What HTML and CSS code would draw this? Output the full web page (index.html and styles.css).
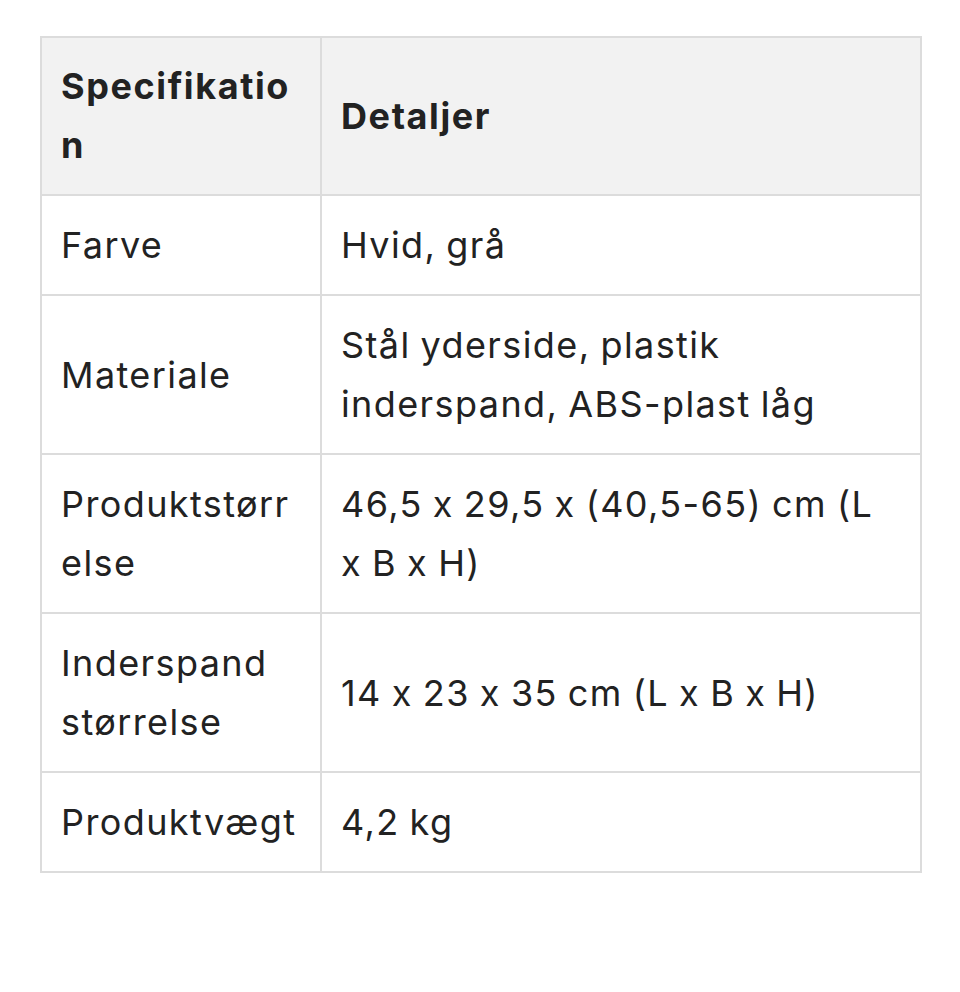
FILE: index.html
```html
<!DOCTYPE html>
<html lang="da">
<head>
<meta charset="utf-8">
<link rel="stylesheet" href="styles.css">
</head>
<body>
<div class="wrap">
<table class="spec">
<colgroup><col class="c1"><col class="c2"></colgroup>
<thead>
<tr><th>Specifikation</th><th>Detaljer</th></tr>
</thead>
<tbody>
<tr><td>Farve</td><td>Hvid, grå</td></tr>
<tr><td>Materiale</td><td>Stål yderside, plastik inderspand, ABS-plast låg</td></tr>
<tr><td>Produktstørrelse</td><td>46,5 x 29,5 x (40,5-65) cm (L x B x H)</td></tr>
<tr><td>Inderspand størrelse</td><td>14 x 23 x 35 cm (L x B x H)</td></tr>
<tr><td>Produktvægt</td><td>4,2 kg</td></tr>
</tbody>
</table>
</div>
</body>
</html>
```
FILE: styles.css
```css
html, body { margin: 0; padding: 0; background: #fff; }
.wrap { padding: 36px 40px; }
.spec {
  width: 880px;
  border-collapse: collapse;
  table-layout: fixed;
  font-family: Inter, "DejaVu Sans", sans-serif;
  font-feature-settings: "calt" 0;
  font-size: 36px;
  letter-spacing: 1.4px;
  word-spacing: -1.5px;
  line-height: 59px;
  color: #222;
}
.c1 { width: 280px; }
.c2 { width: 600px; }
.spec th, .spec td {
  border: 2px solid #dcdcdc;
  text-align: left;
  vertical-align: middle;
  overflow-wrap: anywhere;
}
.spec th {
  padding: 19px;
  background: #f2f2f2;
  font-weight: 700;
  letter-spacing: 1.6px;
}
.spec td {
  padding: 20px 19px 19px;
  font-weight: 400;
}
```
